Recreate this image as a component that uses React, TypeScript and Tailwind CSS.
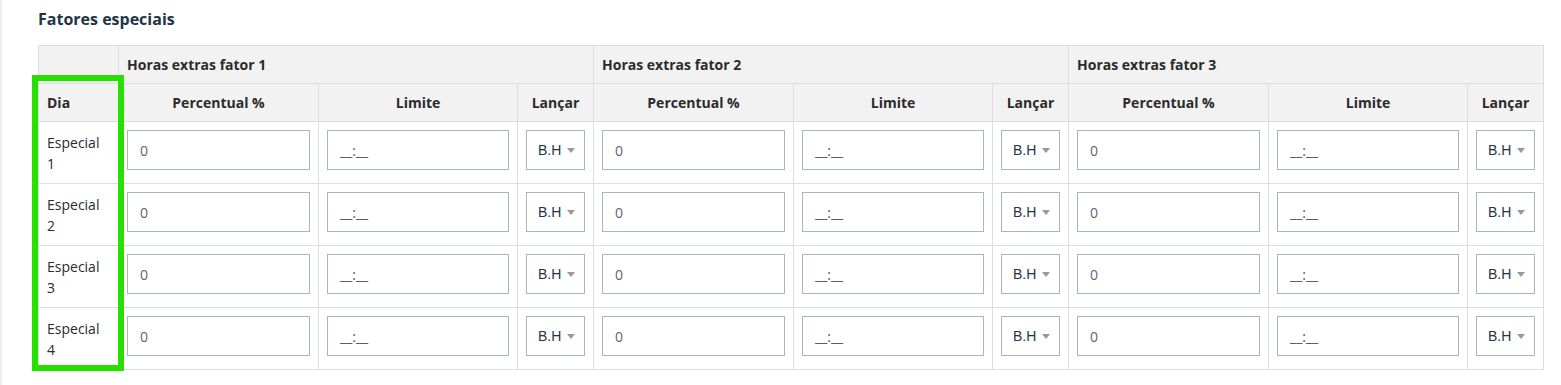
const groups = [1, 2, 3];
const dias = [1, 2, 3, 4];

const cell = "border-r border-b border-[#dddddd]";
const head = `${cell} bg-[#f2f2f2] h-[38px] flex items-center px-2 font-bold text-[14px] text-[#2b2b2b]`;

const BhSelect = () => (
  <div className="h-[40px] w-full border border-[#a9b5bf] bg-white flex items-center pl-[11px] gap-[6px] font-['Liberation_Sans',Arial,sans-serif] text-[14px] text-[#1d3544]">
    <span>B.H</span>
    <span className="w-0 h-0 border-l-[4px] border-r-[4px] border-t-[5px] border-l-transparent border-r-transparent border-t-[#999999]" />
  </div>
);

const App = () => {
  return (
    <div className="flex min-h-[385px] bg-white font-['Open_Sans',sans-serif]">
      {/* faixa lateral */}
      <div className="w-[2px] bg-[#ededeb]" />

      <div className="relative pl-[36px] pt-[7px]">
        <h2 className="text-[16px] leading-[24px] font-bold text-[#223546]">Fatores especiais</h2>

        <div className="mt-[14px] w-fit grid grid-cols-[80px_200px_199px_76px_200px_199px_76px_200px_199px_76px] border-l border-t border-[#dddddd]">
          {/* cabeçalho 1 */}
          <div className={head} />
          {groups.map((g) => (
            <div key={g} className={`${head} col-span-3`}>
              Horas extras fator {g}
            </div>
          ))}

          {/* cabeçalho 2 */}
          <div className={head}>Dia</div>
          {groups.map((g) => [
            <div key={`p${g}`} className={`${head} justify-center`}>Percentual %</div>,
            <div key={`l${g}`} className={`${head} justify-center`}>Limite</div>,
            <div key={`c${g}`} className={`${head} justify-center`}>Lançar</div>,
          ])}

          {/* linhas */}
          {dias.map((d) => [
            <div key={`d${d}`} className={`${cell} h-[62px] px-2 pt-[10px] text-[14px] leading-[21px] text-[#2b2b2b]`}>
              Especial {d}
            </div>,
            ...groups.map((g) => [
              <div key={`p${d}${g}`} className={`${cell} h-[62px] p-2`}>
                <input
                  readOnly
                  value="0"
                  className="h-[40px] w-full border border-[#a9b5bf] px-3 text-[14px] text-[#5a6670] outline-none"
                />
              </div>,
              <div key={`l${d}${g}`} className={`${cell} h-[62px] p-2`}>
                <input
                  readOnly
                  value="__:__"
                  className="h-[40px] w-full border border-[#a9b5bf] px-3 text-[14px] text-[#555555] outline-none"
                />
              </div>,
              <div key={`c${d}${g}`} className={`${cell} h-[62px] p-2`}>
                <BhSelect />
              </div>,
            ]),
          ])}
        </div>

        {/* destaque verde */}
        <div className="absolute left-[30px] top-[75px] w-[92px] h-[296px] border-[6px] border-[#27e000]" />
      </div>
    </div>
  );
};

export default App;
